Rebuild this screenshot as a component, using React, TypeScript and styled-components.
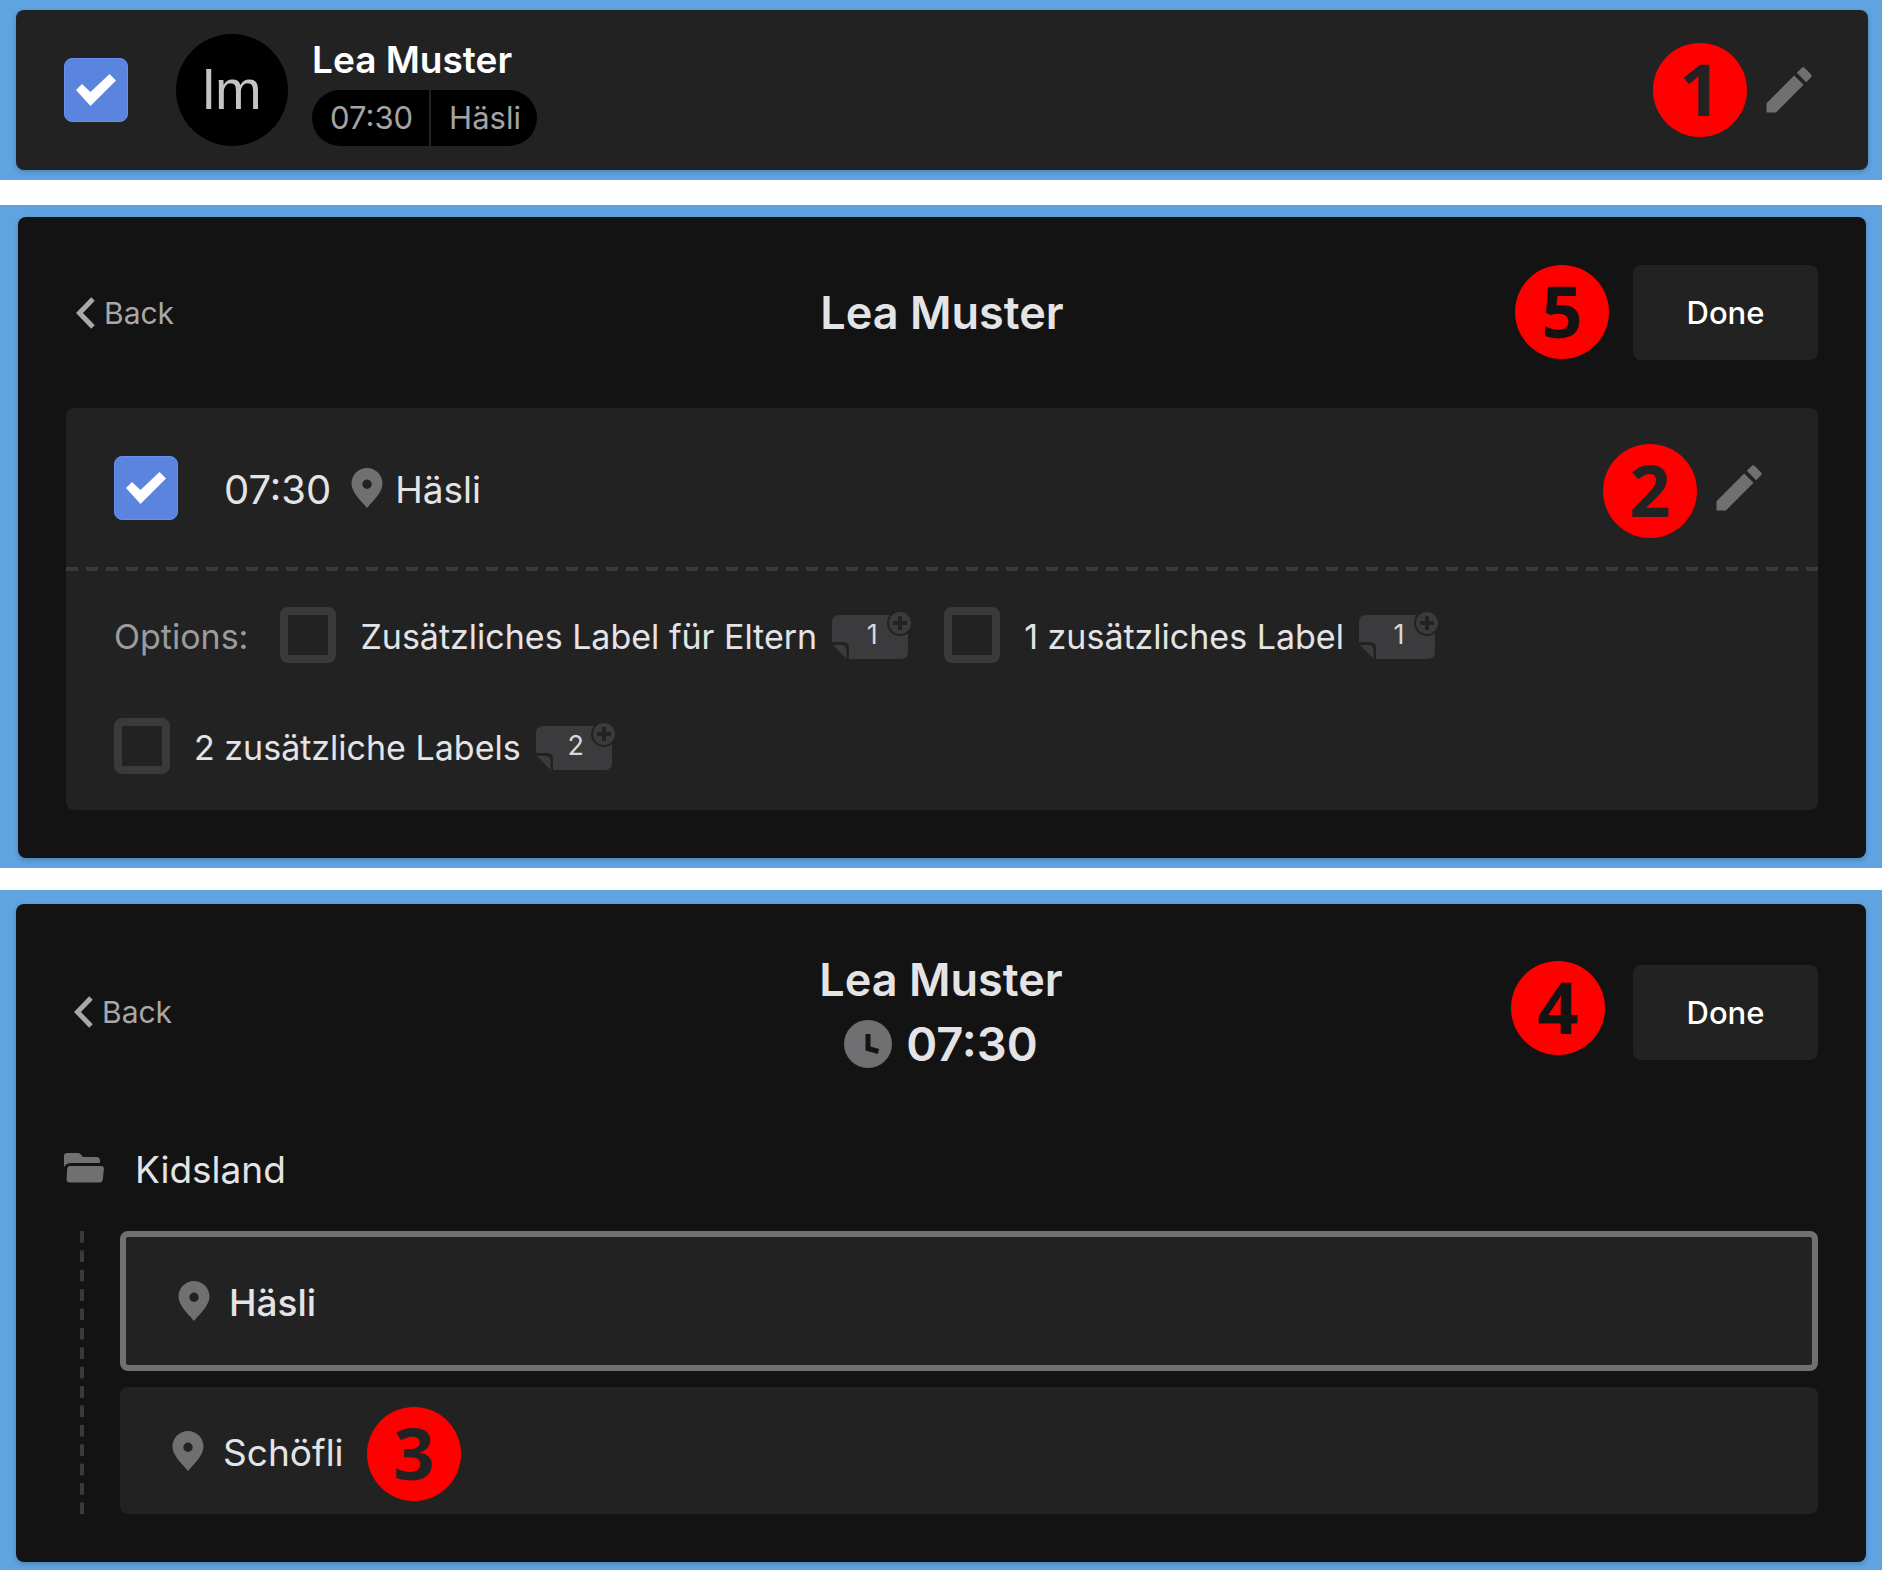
import React, { useId } from "react";
import styled, { createGlobalStyle } from "styled-components";
import { MdEdit } from "react-icons/md";

const color = {
  frame: "#5fa3e0",
  dark: "#131313",
  panel: "#222222",
  line: "#3a3a3b",
  icon: "#707072",
  text: "#e4e4e6",
  muted: "#a8a8aa",
  accent: "#5b84de",
};

const GlobalStyle = createGlobalStyle`
  *, *::before, *::after { box-sizing: border-box; }
  body {
    margin: 0;
    background: #fff;
    font-family: Inter, "Liberation Sans", sans-serif;
    color: ${color.text};
  }
  h1, h2, p, ul { margin: 0; padding: 0; }
  button { font-family: inherit; }
`;

const Page = styled.main`
  display: flex;
  flex-direction: column;
`;

const Frame = styled.section<{ $pad: string; $gapBelow?: number }>`
  background: ${color.frame};
  padding: ${(p) => p.$pad};
  margin-bottom: ${(p) => p.$gapBelow ?? 0}px;
`;

const Card = styled.div<{ $tone: string; $pad: string }>`
  position: relative;
  background: ${(p) => p.$tone};
  border-radius: 8px;
  padding: ${(p) => p.$pad};
  box-shadow: 0 2px 5px rgba(0, 0, 0, 0.2);
`;

const Row = styled.div`
  display: flex;
  align-items: center;
`;

/* Text set beside an icon or box: the top padding centres the letters optically. */
const Text = styled.span`
  padding-top: 4px;
  line-height: 48px;
`;

const Callout = styled.span<{ $top: number; $right?: number; $left?: number; $ink: string }>`
  position: absolute;
  top: ${(p) => p.$top}px;
  ${(p) => (p.$right !== undefined ? `right: ${p.$right}px;` : "")}
  ${(p) => (p.$left !== undefined ? `left: ${p.$left}px;` : "")}
  width: 94px;
  height: 94px;
  border-radius: 50%;
  background: #ff0000;
  color: ${(p) => p.$ink};
  font: 700 72px/90px "Noto Sans", "Open Sans", sans-serif;
  text-align: center;
`;

/* Checkboxes */

const TickWrap = styled.span`
  display: inline-grid;
  flex: none;
  > * {
    grid-area: 1 / 1;
  }
  svg {
    pointer-events: none;
    visibility: hidden;
  }
  input:checked + svg {
    visibility: visible;
  }
`;

const TickBox = styled.input<{ $size: number }>`
  appearance: none;
  margin: 0;
  width: ${(p) => p.$size}px;
  height: ${(p) => p.$size}px;
  border: 8px solid ${color.line};
  border-radius: 8px;
  &:checked {
    border: 1px solid #6690ee;
    background: ${color.accent};
  }
`;

function Tick({ size, ...rest }: { size: number } & Omit<React.InputHTMLAttributes<HTMLInputElement>, "size">) {
  return (
    <TickWrap>
      <TickBox type="checkbox" $size={size} {...rest} />
      <svg width={size} height={size} viewBox="0 0 64 64" aria-hidden="true">
        <path d="M12 32 L18 26 L26.500 34 L45.500 16 L52 22.500 L26.500 48 Z" fill="#fff" />
      </svg>
    </TickWrap>
  );
}

/* Icons */

const Pin = () => (
  <svg width="32" height="40" viewBox="0 0 32 40" aria-hidden="true">
    <path
      fillRule="evenodd"
      fill={color.icon}
      d="M16 0 C7.400 0 .5 6.900 .5 15.500 C.5 19 1.800 22 3.800 25.200 C7 30.500 13 36 16 40 C19 36 25 30.500 28.200 25.200 C30.200 22 31.500 19 31.500 15.500 C31.500 6.900 24.600 0 16 0 Z M16 11.500 A4.700 4.700 0 1 1 16 20.900 A4.700 4.700 0 1 1 16 11.500 Z"
    />
  </svg>
);

const Chevron = () => (
  <svg width="20" height="32" viewBox="0 0 20 32" aria-hidden="true">
    <path d="M17 2 L3.500 16 L17 30" fill="none" stroke={color.muted} strokeWidth="5" />
  </svg>
);

const Clock = () => (
  <svg width="48" height="48" viewBox="0 0 48 48" aria-hidden="true">
    <circle cx="24" cy="24" r="24" fill={color.icon} />
    <path d="M24 14 V28.500 L34.500 31.500" fill="none" stroke={color.dark} strokeWidth="5" />
  </svg>
);

const Folder = () => (
  <svg width="40" height="30" viewBox="0 0 40 30" aria-hidden="true">
    <path fill={color.icon} d="M0 14 V3 Q0 0 3 0 H14 Q15.500 0 16.500 1.200 L19 4 H32.500 Q36 4 36 8 V10 H7.500 Q2 10 0 14 Z" />
    <path fill={color.icon} d="M6 13 H37 Q40 13 39.900 16 L38.800 26.500 Q38.500 29.500 35.500 29.500 H5.500 Q2.500 29.500 2.600 26.500 L3.200 16 Q3.400 13 6 13 Z" />
  </svg>
);

const StickerWrap = styled.span`
  position: relative;
  display: inline-block;
  width: 80px;
  height: 48px;
  svg {
    display: block;
  }
`;

const StickerCount = styled.span`
  position: absolute;
  left: 0;
  right: 0;
  top: 8px;
  font-size: 27px;
  line-height: 32px;
  text-align: center;
  color: #d8d8da;
`;

function Sticker({ count }: { count: number }) {
  return (
    <StickerWrap>
      <svg width="80" height="48" viewBox="0 0 80 48" aria-hidden="true">
        <path d="M0 31 V11 Q0 4 7 4 H69 Q76 4 76 11 V41 Q76 48 69 48 H17 V37 Q17 31 11 31 Z" fill="#3b3b3d" />
        <path d="M1 34 H9.500 Q14.500 34 14.500 39 V48 Z" fill="#3b3b3d" />
        <circle cx="68" cy="12" r="12" fill="#3b3b3d" stroke={color.panel} strokeWidth="2" />
        <path d="M68 5 V19 M61 12 H75" stroke={color.panel} strokeWidth="4" />
      </svg>
      <StickerCount>{count}</StickerCount>
    </StickerWrap>
  );
}

/* Summary card */

const Avatar = styled.span`
  width: 112px;
  height: 112px;
  margin: 0 24px 0 48px;
  border-radius: 50%;
  background: #000;
  color: #c4c4c6;
  font: 56px/112px "Liberation Sans", sans-serif;
  text-align: center;
`;

const PersonName = styled.h2`
  padding-bottom: 4px;
  font-size: 37px;
  font-weight: 600;
  line-height: 52px;
  color: #fff;
`;

const Pills = styled.div`
  display: flex;
  gap: 2px;
  border-radius: 28px;
  overflow: hidden;
`;

const Pill = styled.span`
  padding: 0 16px 0 18px;
  background: #000;
  color: #a4a4a6;
  font-size: 31px;
  line-height: 56px;
`;

const EditButton = styled.button`
  display: flex;
  margin-left: auto;
  padding: 0 1px 0 0;
  border: 0;
  background: none;
  color: ${color.icon};
  cursor: pointer;
`;

/* Detail cards */

const Header = styled.header<{ $below: number }>`
  display: grid;
  grid-template-columns: 1fr auto 1fr;
  align-items: center;
  margin-bottom: ${(p) => p.$below}px;
`;

const BackLink = styled.a`
  display: flex;
  justify-self: start;
  align-items: center;
  gap: 8px;
  padding-left: 10px;
  color: ${color.muted};
  font-size: 30px;
  line-height: 48px;
  text-decoration: none;
`;

const Title = styled.h1`
  display: flex;
  flex-direction: column;
  align-items: center;
  font-size: 45px;
  font-weight: 600;
  line-height: 64px;
`;

const TitleTime = styled.span`
  display: flex;
  align-items: center;
  gap: 14px;
  font-size: 47px;
`;

const DoneButton = styled.button`
  justify-self: end;
  width: 185px;
  height: 95px;
  border: 0;
  border-radius: 8px;
  background: ${color.panel};
  color: #fff;
  font-size: 31px;
  font-weight: 500;
  cursor: pointer;
`;

const Panel = styled.div`
  border-radius: 8px;
  background: ${color.panel};
`;

const SlotRow = styled(Row)`
  padding: 48px 48px 47px;
`;

const SlotLabel = styled.label`
  display: flex;
  align-items: center;
  gap: 46px;
`;

const SlotText = styled.span`
  display: flex;
  align-items: center;
  font-size: 40px;
`;

const Place = styled.span`
  display: flex;
  align-items: center;
  gap: 12px;
  margin-left: 20px;
  font-size: 37px;
`;

const Divider = styled.div`
  height: 4px;
  background: repeating-linear-gradient(90deg, ${color.line} 0 12px, transparent 12px 20px);
`;

const Options = styled.div`
  display: flex;
  flex-wrap: wrap;
  align-items: center;
  gap: 55px 32px;
  padding: 36px 48px;
  font-size: 34px;
`;

const OptionsTitle = styled(Text)`
  color: #9c9c9e;
`;

const OptionItem = styled.div`
  display: flex;
  align-items: center;
  gap: 24px;
`;

const OptionLabel = styled.label`
  display: flex;
  align-items: center;
  gap: 15px;
`;

function Option({ text, count }: { text: string; count: number }) {
  const id = useId();
  return (
    <OptionItem>
      <Tick size={56} id={id} />
      <OptionLabel htmlFor={id}>
        <Text>{text}</Text>
        <Sticker count={count} />
      </OptionLabel>
    </OptionItem>
  );
}

/* Location picker */

const Group = styled(Row)`
  gap: 31px;
  min-height: 64px;
  margin-bottom: 31px;
  font-size: 37px;
`;

const Tree = styled.div`
  display: flex;
  gap: 36px;
  padding-left: 16px;
`;

const TreeLine = styled.div`
  width: 4px;
  margin-bottom: -8px;
  background: linear-gradient(${color.line} 62%, transparent 62%) 0 0 / 4px 19px round;
`;

const Locations = styled.ul`
  display: flex;
  flex: 1;
  flex-direction: column;
  gap: 16px;
  list-style: none;
`;

const Location = styled.button<{ $selected?: boolean }>`
  display: flex;
  align-items: center;
  gap: 19px;
  width: 100%;
  min-height: ${(p) => (p.$selected ? 140 : 127)}px;
  padding: 0 52px;
  border: ${(p) => (p.$selected ? `6px solid ${color.icon}` : "0")};
  border-radius: 8px;
  background: ${color.panel};
  color: ${color.text};
  font-size: 37px;
  font-weight: ${(p) => (p.$selected ? 500 : 400)};
  text-align: left;
  cursor: pointer;
`;

export default function App() {
  return (
    <>
      <GlobalStyle />
      <Page>
        <Frame $pad="10px 14px 10px 16px" $gapBelow={25}>
          <Card $tone={color.panel} $pad="24px 48px">
            <Row>
              <Tick size={64} defaultChecked aria-label="Lea Muster" />
              <Avatar>lm</Avatar>
              <div>
                <PersonName>Lea Muster</PersonName>
                <Pills>
                  <Pill>07:30</Pill>
                  <Pill>Häsli</Pill>
                </Pills>
              </div>
              <EditButton aria-label="Edit">
                <MdEdit size={60} />
              </EditButton>
            </Row>
            <Callout $top={33} $right={121} $ink={color.panel}>1</Callout>
          </Card>
        </Frame>

        <Frame $pad="12px 16px 10px 18px" $gapBelow={22}>
          <Card $tone={color.dark} $pad="48px">
            <Header $below={48}>
              <BackLink href="#back">
                <Chevron />
                Back
              </BackLink>
              <Title>Lea Muster</Title>
              <DoneButton>Done</DoneButton>
            </Header>
            <Panel>
              <SlotRow>
                <SlotLabel>
                  <Tick size={64} defaultChecked />
                  <SlotText>
                    <Text>07:30</Text>
                    <Place>
                      <Pin />
                      <Text>Häsli</Text>
                    </Place>
                  </SlotText>
                </SlotLabel>
                <EditButton aria-label="Edit">
                  <MdEdit size={60} />
                </EditButton>
              </SlotRow>
              <Divider />
              <Options>
                <OptionsTitle>Options:</OptionsTitle>
                <Option text="Zusätzliches Label für Eltern" count={1} />
                <Option text="1 zusätzliches Label" count={1} />
                <Option text="2 zusätzliche Labels" count={2} />
              </Options>
            </Panel>
            <Callout $top={48} $right={257} $ink={color.dark}>5</Callout>
            <Callout $top={227} $right={169} $ink={color.panel}>2</Callout>
          </Card>
        </Frame>

        <Frame $pad="14px 16px 8px 16px">
          <Card $tone={color.dark} $pad="44px 48px 48px">
            <Header $below={60}>
              <BackLink href="#back">
                <Chevron />
                Back
              </BackLink>
              <Title>
                Lea Muster
                <TitleTime>
                  <Clock />
                  07:30
                </TitleTime>
              </Title>
              <DoneButton>Done</DoneButton>
            </Header>
            <Group>
              <Folder />
              <Text>Kidsland</Text>
            </Group>
            <Tree>
              <TreeLine />
              <Locations>
                <li>
                  <Location $selected>
                    <Pin />
                    <Text>Häsli</Text>
                  </Location>
                </li>
                <li>
                  <Location>
                    <Pin />
                    <Text>Schöfli</Text>
                  </Location>
                </li>
              </Locations>
            </Tree>
            <Callout $top={57} $right={261} $ink={color.dark}>4</Callout>
            <Callout $top={503} $left={351} $ink={color.panel}>3</Callout>
          </Card>
        </Frame>
      </Page>
    </>
  );
}
